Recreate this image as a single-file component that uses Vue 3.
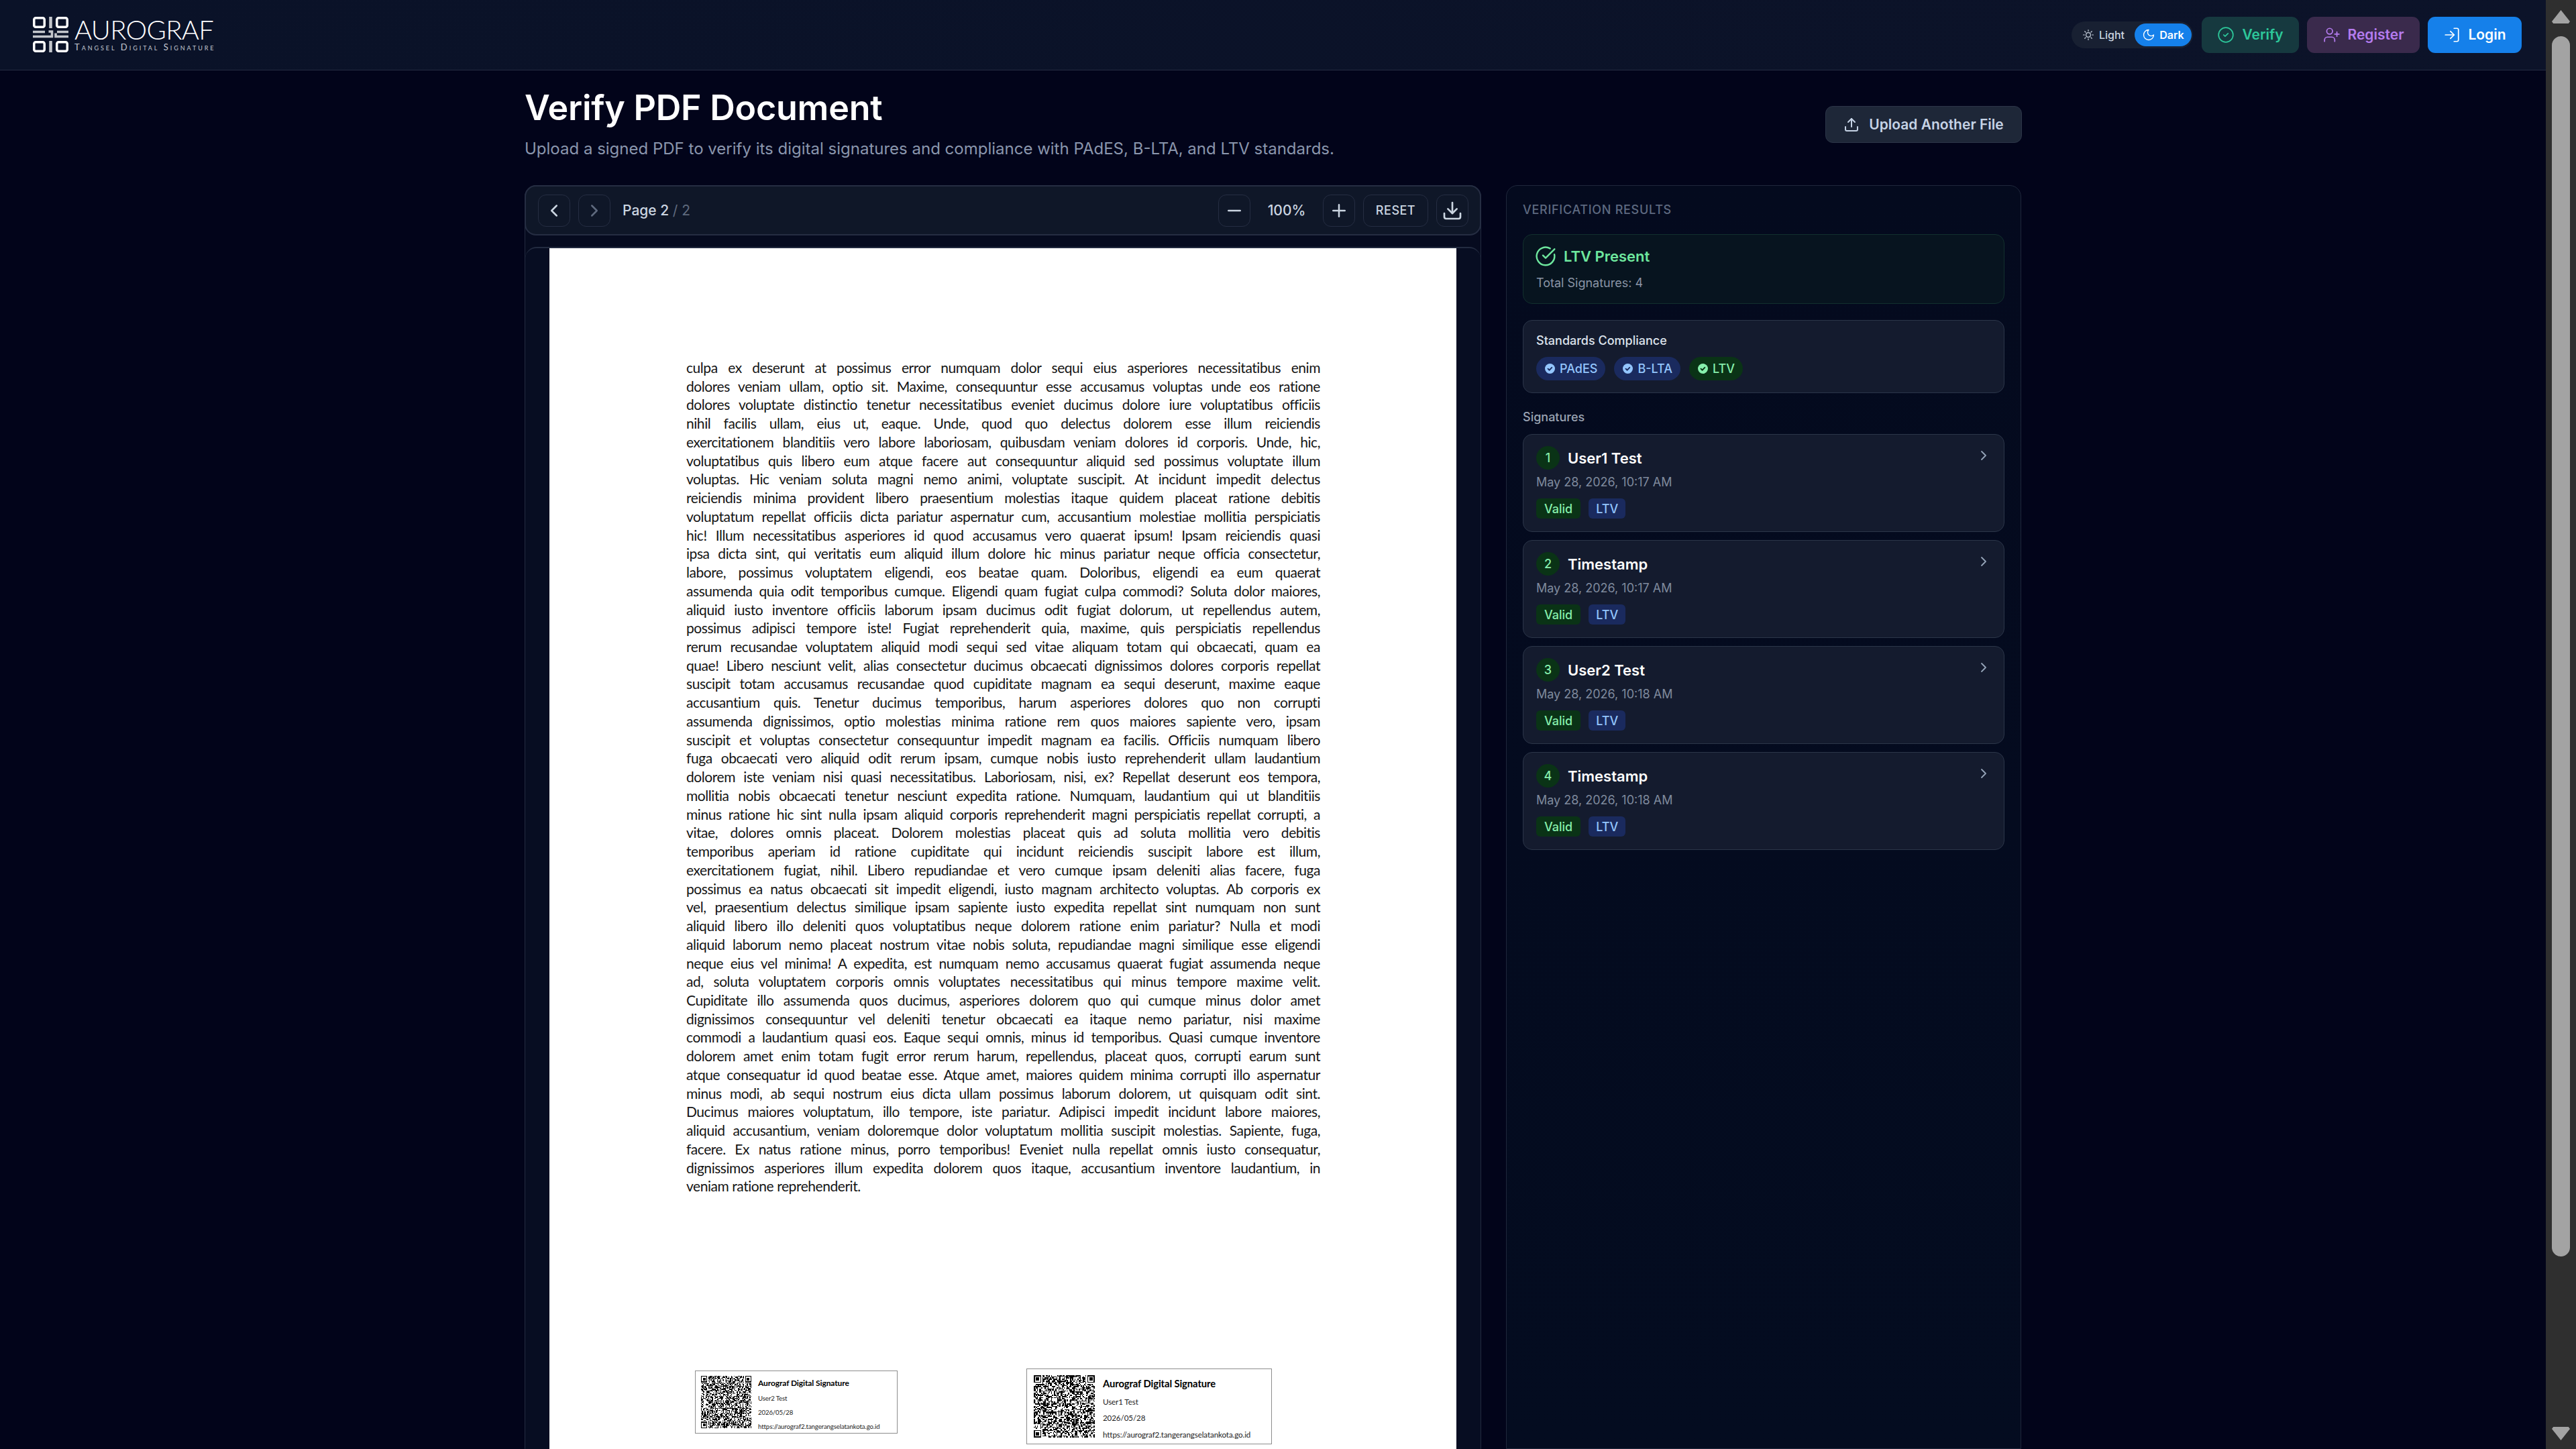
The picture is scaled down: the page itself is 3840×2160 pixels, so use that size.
<script setup>
const pdfLines = `culpa ex deserunt at possimus error numquam dolor sequi eius asperiores necessitatibus enim
dolores veniam ullam, optio sit. Maxime, consequuntur esse accusamus voluptas unde eos ratione
dolores voluptate distinctio tenetur necessitatibus eveniet ducimus dolore iure voluptatibus officiis
nihil facilis ullam, eius ut, eaque. Unde, quod quo delectus dolorem esse illum reiciendis
exercitationem blanditiis vero labore laboriosam, quibusdam veniam dolores id corporis. Unde, hic,
voluptatibus quis libero eum atque facere aut consequuntur aliquid sed possimus voluptate illum
voluptas. Hic veniam soluta magni nemo animi, voluptate suscipit. At incidunt impedit delectus
reiciendis minima provident libero praesentium molestias itaque quidem placeat ratione debitis
voluptatum repellat officiis dicta pariatur aspernatur cum, accusantium molestiae mollitia perspiciatis
hic! Illum necessitatibus asperiores id quod accusamus vero quaerat ipsum! Ipsam reiciendis quasi
ipsa dicta sint, qui veritatis eum aliquid illum dolore hic minus pariatur neque officia consectetur,
labore, possimus voluptatem eligendi, eos beatae quam. Doloribus, eligendi ea eum quaerat
assumenda quia odit temporibus cumque. Eligendi quam fugiat culpa commodi? Soluta dolor maiores,
aliquid iusto inventore officiis laborum ipsam ducimus odit fugiat dolorum, ut repellendus autem,
possimus adipisci tempore iste! Fugiat reprehenderit quia, maxime, quis perspiciatis repellendus
rerum recusandae voluptatem aliquid modi sequi sed vitae aliquam totam qui obcaecati, quam ea
quae! Libero nesciunt velit, alias consectetur ducimus obcaecati dignissimos dolores corporis repellat
suscipit totam accusamus recusandae quod cupiditate magnam ea sequi deserunt, maxime eaque
accusantium quis. Tenetur ducimus temporibus, harum asperiores dolores quo non corrupti
assumenda dignissimos, optio molestias minima ratione rem quos maiores sapiente vero, ipsam
suscipit et voluptas consectetur consequuntur impedit magnam ea facilis. Officiis numquam libero
fuga obcaecati vero aliquid odit rerum ipsam, cumque nobis iusto reprehenderit ullam laudantium
dolorem iste veniam nisi quasi necessitatibus. Laboriosam, nisi, ex? Repellat deserunt eos tempora,
mollitia nobis obcaecati tenetur nesciunt expedita ratione. Numquam, laudantium qui ut blanditiis
minus ratione hic sint nulla ipsam aliquid corporis reprehenderit magni perspiciatis repellat corrupti, a
vitae, dolores omnis placeat. Dolorem molestias placeat quis ad soluta mollitia vero debitis
temporibus aperiam id ratione cupiditate qui incidunt reiciendis suscipit labore est illum,
exercitationem fugiat, nihil. Libero repudiandae et vero cumque ipsam deleniti alias facere, fuga
possimus ea natus obcaecati sit impedit eligendi, iusto magnam architecto voluptas. Ab corporis ex
vel, praesentium delectus similique ipsam sapiente iusto expedita repellat sint numquam non sunt
aliquid libero illo deleniti quos voluptatibus neque dolorem ratione enim pariatur? Nulla et modi
aliquid laborum nemo placeat nostrum vitae nobis soluta, repudiandae magni similique esse eligendi
neque eius vel minima! A expedita, est numquam nemo accusamus quaerat fugiat assumenda neque
ad, soluta voluptatem corporis omnis voluptates necessitatibus qui minus tempore maxime velit.
Cupiditate illo assumenda quos ducimus, asperiores dolorem quo qui cumque minus dolor amet
dignissimos consequuntur vel deleniti tenetur obcaecati ea itaque nemo pariatur, nisi maxime
commodi a laudantium quasi eos. Eaque sequi omnis, minus id temporibus. Quasi cumque inventore
dolorem amet enim totam fugit error rerum harum, repellendus, placeat quos, corrupti earum sunt
atque consequatur id quod beatae esse. Atque amet, maiores quidem minima corrupti illo aspernatur
minus modi, ab sequi nostrum eius dicta ullam possimus laborum dolorem, ut quisquam odit sint.
Ducimus maiores voluptatum, illo tempore, iste pariatur. Adipisci impedit incidunt labore maiores,
aliquid accusantium, veniam doloremque dolor voluptatum mollitia suscipit molestias. Sapiente, fuga,
facere. Ex natus ratione minus, porro temporibus! Eveniet nulla repellat omnis iusto consequatur,
dignissimos asperiores illum expedita dolorem quos itaque, accusantium inventore laudantium, in`.split('\n')
const lastLine = 'veniam ratione reprehenderit.'

const signatures = [
  { n: 1, name: 'User1 Test', date: 'May 28, 2026, 10:17 AM' },
  { n: 2, name: 'Timestamp', date: 'May 28, 2026, 10:17 AM' },
  { n: 3, name: 'User2 Test', date: 'May 28, 2026, 10:18 AM' },
  { n: 4, name: 'Timestamp', date: 'May 28, 2026, 10:18 AM' },
]

function qrPath(seed) {
  const size = 57
  let s = seed
  const rnd = () => {
    s = (s * 1664525 + 1013904223) >>> 0
    return (s >>> 16) / 65536
  }
  let d = ''
  const inFinder = (x, y) =>
    (x < 8 && y < 8) || (x >= size - 8 && y < 8) || (x < 8 && y >= size - 8)
  for (let y = 0; y < size; y++) {
    for (let x = 0; x < size; x++) {
      if (!inFinder(x, y) && rnd() > 0.5) d += `M${x} ${y}h1v1h-1z`
    }
  }
  for (const [fx, fy] of [[0, 0], [size - 7, 0], [0, size - 7]]) {
    d += `M${fx} ${fy}h7v7h-7zM${fx + 1} ${fy + 1}v5h5v-5zM${fx + 2} ${fy + 2}h3v3h-3z`
  }
  return d
}
const qrA = qrPath(12345)
const qrB = qrPath(98765)
</script>

<template>
  <div class="app">
    <div class="viewport">
      <header class="nav">
        <div class="brand">
          <svg class="brand-mark" viewBox="0 0 53 53" fill="none" stroke="#fff">
            <rect x="1.75" y="1.75" width="15.5" height="13.5" rx="2.5" stroke-width="3.5" />
            <rect x="35.75" y="1.75" width="15.5" height="13.5" rx="2.5" stroke-width="3.5" />
            <rect x="1.75" y="37.75" width="15.5" height="13.5" rx="2.5" stroke-width="3.5" />
            <rect x="35.75" y="37.75" width="15.5" height="13.5" rx="2.5" stroke-width="3.5" />
            <path d="M26.5 0v17M26.5 36v17" stroke="#c3c6cc" stroke-width="4.5" />
            <path d="M0 22.5h18M53 22.5h-17M0 29.5h28.5v-7.5h-5M53 29.5h-19v-5" stroke="#c3c6cc" stroke-width="3.6" />
          </svg>
          <div class="brand-text">
            <div class="brand-name">AUROGRAF</div>
            <div class="brand-sub">Tangsel Digital Signature</div>
          </div>
        </div>
        <div class="nav-actions">
          <div class="theme">
            <span class="theme-opt">
              <svg class="ico-theme" viewBox="0 0 24 24" fill="none" stroke="currentColor" stroke-width="1.6" stroke-linecap="round">
                <circle cx="12" cy="12" r="4.5" />
                <path d="M12 2v2.5M12 19.5V22M2 12h2.5M19.5 12H22M5 5l1.8 1.8M17.2 17.2 19 19M5 19l1.8-1.8M17.2 6.8 19 5" />
              </svg>
              Light
            </span>
            <span class="theme-opt active">
              <svg class="ico-theme ico-moon" viewBox="0 0 24 24" fill="none" stroke="currentColor" stroke-width="1.6" stroke-linecap="round" stroke-linejoin="round">
                <path d="M12 3a6 6 0 0 0 9 9 9 9 0 1 1-9-9Z" />
              </svg>
              Dark
            </span>
          </div>
          <button class="nav-btn verify">
            <svg class="nav-ico" viewBox="0 0 24 24" fill="none" stroke="currentColor" stroke-width="1.6" stroke-linecap="round" stroke-linejoin="round">
              <circle cx="12" cy="12" r="10" /><path d="m9 12 2 2 4-4" />
            </svg>
            Verify
          </button>
          <button class="nav-btn register">
            <svg class="nav-ico" viewBox="0 0 24 24" fill="none" stroke="currentColor" stroke-width="1.6" stroke-linecap="round" stroke-linejoin="round">
              <path d="M16 21v-2a4 4 0 0 0-4-4H6a4 4 0 0 0-4 4v2" /><circle cx="9" cy="7" r="4" /><path d="M19 8v6M22 11h-6" />
            </svg>
            Register
          </button>
          <button class="nav-btn login">
            <svg class="nav-ico" viewBox="0 0 24 24" fill="none" stroke="currentColor" stroke-width="1.6" stroke-linecap="round" stroke-linejoin="round">
              <path d="M15 3h4a2 2 0 0 1 2 2v14a2 2 0 0 1-2 2h-4" /><path d="m10 17 5-5-5-5" /><path d="M15 12H3" />
            </svg>
            Login
          </button>
        </div>
      </header>

      <main class="content">
        <div class="head">
          <div>
            <h1 class="title">Verify PDF Document</h1>
            <p class="subtitle">Upload a signed PDF to verify its digital signatures and compliance with PAdES, B-LTA, and LTV standards.</p>
          </div>
          <button class="upload">
            <svg class="upload-ico" viewBox="0 0 24 24" fill="none" stroke="currentColor" stroke-width="2" stroke-linecap="round" stroke-linejoin="round">
              <path d="M21 15v4a2 2 0 0 1-2 2H5a2 2 0 0 1-2-2v-4" /><path d="m17 8-5-5-5 5" /><path d="M12 3v12" />
            </svg>
            Upload Another File
          </button>
        </div>

        <div class="columns">
          <section class="viewer">
            <div class="toolbar">
              <div class="tool-group">
                <button class="tool">
                  <svg class="tool-ico" viewBox="0 0 24 24" fill="none" stroke="currentColor" stroke-width="2" stroke-linecap="round" stroke-linejoin="round"><path d="m15 18-6-6 6-6" /></svg>
                </button>
                <button class="tool off">
                  <svg class="tool-ico" viewBox="0 0 24 24" fill="none" stroke="currentColor" stroke-width="2" stroke-linecap="round" stroke-linejoin="round"><path d="m9 18 6-6-6-6" /></svg>
                </button>
                <span class="page-no">Page 2 <span class="page-of">/ 2</span></span>
              </div>
              <div class="tool-group right">
                <button class="tool">
                  <svg class="tool-ico" viewBox="0 0 24 24" fill="none" stroke="currentColor" stroke-width="2" stroke-linecap="round"><path d="M5 12h14" /></svg>
                </button>
                <span class="zoom-val">100%</span>
                <button class="tool">
                  <svg class="tool-ico" viewBox="0 0 24 24" fill="none" stroke="currentColor" stroke-width="2" stroke-linecap="round"><path d="M5 12h14M12 5v14" /></svg>
                </button>
                <button class="tool reset">RESET</button>
                <button class="tool">
                  <svg class="tool-ico large" viewBox="0 0 24 24" fill="none" stroke="currentColor" stroke-width="2" stroke-linecap="round" stroke-linejoin="round">
                    <path d="M21 15v4a2 2 0 0 1-2 2H5a2 2 0 0 1-2-2v-4" /><path d="m7 10 5 5 5-5" /><path d="M12 15V3" />
                  </svg>
                </button>
              </div>
            </div>
            <div class="canvas">
              <div class="pdf-page">
                <div class="pdf-text">
                  <div v-for="(l, i) in pdfLines" :key="i" class="pdf-line">{{ l }}</div>
                  <div class="pdf-line last">{{ lastLine }}</div>
                </div>
                <div class="stamps">
                  <div class="stamp small">
                    <svg class="qr" viewBox="0 0 57 57" shape-rendering="crispEdges" preserveAspectRatio="none"><path :d="qrA" fill="#000" fill-rule="evenodd" /></svg>
                    <div class="stamp-text">
                      <div class="stamp-title">Aurograf Digital Signature</div>
                      <div>User2 Test</div>
                      <div>2026/05/28</div>
                      <div>https://aurograf2.tangerangselatankota.go.id</div>
                    </div>
                  </div>
                  <div class="stamp big">
                    <svg class="qr" viewBox="0 0 57 57" shape-rendering="crispEdges" preserveAspectRatio="none"><path :d="qrB" fill="#000" fill-rule="evenodd" /></svg>
                    <div class="stamp-text">
                      <div class="stamp-title">Aurograf Digital Signature</div>
                      <div>User1 Test</div>
                      <div>2026/05/28</div>
                      <div>https://aurograf2.tangerangselatankota.go.id</div>
                    </div>
                  </div>
                </div>
              </div>
            </div>
          </section>

          <aside class="results">
            <div class="results-head">VERIFICATION RESULTS</div>
            <div class="ltv-card">
              <div class="ltv-row">
                <svg class="ltv-ico" viewBox="0 0 24 24" fill="none" stroke="currentColor" stroke-width="1.8" stroke-linecap="round" stroke-linejoin="round">
                  <path d="M21.8 10A10 10 0 1 1 17 3.3" /><path d="m9 11 3 3L22 4" />
                </svg>
                LTV Present
              </div>
              <div class="ltv-total">Total Signatures: 4</div>
            </div>
            <div class="std-card">
              <div class="std-title">Standards Compliance</div>
              <div class="chips">
                <span class="chip blue">
                  <svg class="chip-ico" viewBox="0 0 16 16"><circle cx="8" cy="8" r="8" fill="currentColor" /><path d="m4.8 8.2 2.2 2.2 4-4.2" fill="none" stroke="#1a2a5e" stroke-width="2" stroke-linecap="round" stroke-linejoin="round" /></svg>
                  PAdES
                </span>
                <span class="chip blue">
                  <svg class="chip-ico" viewBox="0 0 16 16"><circle cx="8" cy="8" r="8" fill="currentColor" /><path d="m4.8 8.2 2.2 2.2 4-4.2" fill="none" stroke="#1a2a5e" stroke-width="2" stroke-linecap="round" stroke-linejoin="round" /></svg>
                  B-LTA
                </span>
                <span class="chip green">
                  <svg class="chip-ico" viewBox="0 0 16 16"><circle cx="8" cy="8" r="8" fill="currentColor" /><path d="m4.8 8.2 2.2 2.2 4-4.2" fill="none" stroke="#0a3316" stroke-width="2" stroke-linecap="round" stroke-linejoin="round" /></svg>
                  LTV
                </span>
              </div>
            </div>
            <div class="sig-label">Signatures</div>
            <div class="sig-list">
              <div v-for="s in signatures" :key="s.n" class="sig">
                <div class="sig-top">
                  <span class="sig-n">{{ s.n }}</span>
                  <span class="sig-name">{{ s.name }}</span>
                  <svg class="sig-chev" viewBox="0 0 24 24" fill="none" stroke="currentColor" stroke-width="1.8" stroke-linecap="round" stroke-linejoin="round"><path d="m9 18 6-6-6-6" /></svg>
                </div>
                <div class="sig-date">{{ s.date }}</div>
                <div class="sig-tags">
                  <span class="tag valid">Valid</span>
                  <span class="tag ltv">LTV</span>
                </div>
              </div>
            </div>
          </aside>
        </div>
      </main>
    </div>
    <div class="scrollbar">
      <span class="arrow up"></span>
      <span class="thumb"></span>
      <span class="arrow down"></span>
    </div>
  </div>
</template>

<style>
html, body { margin: 0; background: #02041a; overflow: hidden; }
</style>

<style scoped>
* { box-sizing: border-box; }
button { font-family: inherit; cursor: pointer; }
.app {
  display: flex;
  width: 3840px;
  height: 2160px;
  overflow: hidden;
  background: #02041a;
  font-family: Inter, "Noto Sans", sans-serif;
  color: #fff;
}
.viewport { width: 3795px; height: 2160px; overflow: hidden; }

.nav {
  height: 105px;
  border-bottom: 1px solid #252c42;
  background: linear-gradient(90deg, #0a1228, #0c1329);
  display: flex;
  align-items: center;
  justify-content: space-between;
  padding: 0 36px 1px 49px;
}
.brand { display: flex; align-items: center; gap: 9px; }
.brand-mark { width: 53px; height: 53px; }
.brand-text { display: flex; flex-direction: column; }
.brand-name {
  font-family: Lato, sans-serif;
  font-weight: 300;
  font-size: 40px;
  line-height: 36px;
  letter-spacing: -0.75px;
  color: #fff;
}
.brand-sub {
  font-family: Lato, sans-serif;
  font-variant: small-caps;
  font-size: 13px;
  line-height: 16px;
  letter-spacing: 2.95px;
  color: #c6cad3;
}
.nav-actions { display: flex; align-items: center; gap: 12px; }
.theme {
  display: flex;
  align-items: center;
  justify-content: space-between;
  width: 181px;
  height: 40px;
  padding: 0 2px 0 16px;
  margin-right: 1px;
  border-radius: 20px;
  background: #182032;
}
.theme-opt {
  display: flex;
  align-items: center;
  gap: 7px;
  font-size: 16px;
  font-weight: 500;
  color: #cbd5e1;
}
.theme-opt.active {
  width: 85px;
  height: 34px;
  justify-content: center;
  border-radius: 17px;
  background: #1580ea;
  color: #fff;
  font-weight: 600;
  gap: 6px;
}
.ico-theme { width: 18px; height: 18px; }
.ico-moon { width: 20px; height: 20px; }
.nav-btn {
  display: flex;
  align-items: center;
  justify-content: center;
  gap: 11px;
  height: 54px;
  border: 0;
  border-radius: 11px;
  font-size: 21px;
  font-weight: 600;
}
.nav-ico { width: 26px; height: 26px; }
.verify { width: 145px; background: #16393f; color: #2dc79a; }
.register { width: 168px; background: #3a2a4c; color: #b57cf0; }
.login { width: 140px; background: #1580ea; color: #fff; }

.content { margin-left: 782px; width: 2232px; }
.head {
  display: flex;
  align-items: flex-start;
  justify-content: space-between;
  height: 171px;
}
.title {
  margin: 0;
  padding-top: 25px;
  font-size: 52px;
  line-height: 62px;
  font-weight: 600;
  letter-spacing: -0.25px;
  color: #fff;
}
.subtitle {
  margin: 12px 0 0;
  font-size: 24px;
  line-height: 36px;
  color: #8a96ad;
}
.upload {
  margin-top: 53px;
  width: 293px;
  height: 55px;
  display: flex;
  align-items: center;
  justify-content: center;
  gap: 14px;
  border: 1px solid #2c3548;
  border-radius: 11px;
  background: #1e2738;
  color: #c6d3e6;
  font-size: 21px;
  font-weight: 600;
}
.upload-ico { width: 24px; height: 24px; }

.columns {
  display: grid;
  grid-template-columns: 1426px 768px;
  column-gap: 37px;
}
.viewer {
  height: 1884px;
  border: 1px solid #232b40;
  border-radius: 17px 17px 0 0;
  background: #060b1f;
}
.toolbar {
  margin: -1px -1px 0;
  height: 75px;
  display: flex;
  align-items: center;
  justify-content: space-between;
  padding: 0 17px 0 18px;
  border: 2px solid #252d42;
  border-radius: 17px;
  background: #0f1728;
}
.tool-group { display: flex; align-items: center; gap: 12px; }
.tool {
  width: 48px;
  height: 48px;
  padding: 0;
  display: flex;
  align-items: center;
  justify-content: center;
  border: 1px solid #252d42;
  border-radius: 12px;
  background: transparent;
  color: #cbd5e1;
}
.tool.off { color: #5f6a7e; }
.tool-ico { width: 30px; height: 30px; }
.tool-ico.large { width: 32px; height: 32px; }
.tool.reset {
  width: 97px;
  font-size: 18px;
  font-weight: 500;
  letter-spacing: 0.5px;
  color: #cbd5e1;
}
.page-no {
  margin-left: 6px;
  font-size: 21px;
  font-weight: 500;
  color: #cbd5e1;
}
.page-of { font-weight: 400; color: #5f6a7e; }
.zoom-val {
  width: 84px;
  text-align: center;
  font-size: 21px;
  font-weight: 500;
  color: #cbd5e1;
}
.canvas {
  margin-top: 17px;
  height: 1792px;
  overflow: hidden;
  display: flex;
  justify-content: center;
  border-top: 2px solid #232b40;
  border-radius: 17px 17px 0 0;
  background: #070d22;
}
.pdf-page {
  width: 1352px;
  height: 1792px;
  flex: none;
  background: #fff;
  color: #111;
  padding: 164px 0 0;
}
.pdf-text { margin-left: 204px; width: 945px; }
.pdf-line {
  font-family: Lato, sans-serif;
  font-size: 21px;
  line-height: 27.73px;
  letter-spacing: -0.45px;
  text-align: justify;
  text-align-last: justify;
  white-space: nowrap;
  color: #151515;
}
.pdf-line.last { text-align-last: left; }
.stamps {
  display: flex;
  align-items: flex-start;
  margin: 258px 0 0 217px;
  color: #222;
  font-family: Lato, sans-serif;
}
.stamp {
  display: flex;
  flex: none;
  background: #fff;
  border: 1px solid #8d8d8d;
}
.stamp.small {
  width: 302px;
  height: 94px;
  margin-top: 3px;
  padding: 7px 8px 4px 8px;
  gap: 10px;
  font-size: 9.6px;
  letter-spacing: -0.1px;
}
.stamp.big {
  width: 366px;
  height: 113px;
  margin-left: 192px;
  padding: 9px 10px 7px;
  gap: 12px;
  font-size: 11.6px;
  letter-spacing: -0.1px;
}
.qr { flex: none; }
.small .qr { width: 75px; height: 78px; }
.big .qr { width: 91px; height: 93px; }
.stamp-text {
  display: flex;
  flex-direction: column;
  justify-content: space-between;
  white-space: nowrap;
  padding: 3px 0 0;
}
.stamp-title { font-weight: 700; color: #000; }
.small .stamp-title { font-size: 12px; }
.big .stamp-title { font-size: 14.8px; }

.results {
  height: 1884px;
  padding: 20px 24px 0;
  border: 1px solid #1f273b;
  border-radius: 17px 17px 0 0;
  background: linear-gradient(180deg, #040a1e, #040c20);
}
.results-head {
  height: 32px;
  line-height: 32px;
  font-size: 18px;
  font-weight: 500;
  letter-spacing: 0.7px;
  color: #5d6980;
}
.ltv-card {
  margin-top: 20px;
  height: 104px;
  padding: 17px 19px;
  border: 1px solid #12302e;
  border-radius: 14px;
  background: #07141f;
}
.ltv-row {
  display: flex;
  align-items: center;
  gap: 11px;
  height: 30px;
  font-size: 22px;
  font-weight: 600;
  color: #6ee79e;
}
.ltv-ico { width: 32px; height: 32px; margin-left: -2px; }
.ltv-total {
  margin-top: 13px;
  font-size: 18px;
  line-height: 24px;
  color: #8a94a6;
}
.std-card {
  margin-top: 24px;
  height: 109px;
  padding: 18px 19px;
  border: 1px solid #2b3549;
  border-radius: 14px;
  background: #141b2e;
}
.std-title {
  font-size: 18px;
  line-height: 24px;
  font-weight: 500;
  color: #dde3ec;
}
.chips { display: flex; gap: 13px; margin-top: 12px; }
.chip {
  display: flex;
  align-items: center;
  gap: 7px;
  height: 35px;
  padding: 0 12px 0 13px;
  border-radius: 17.5px;
  font-size: 18px;
  font-weight: 500;
}
.chip-ico { width: 15px; height: 15px; }
.chip.blue { background: #1a2a5e; color: #93c5fd; }
.chip.green { background: #0a3316; color: #86efac; }
.sig-label {
  margin-top: 23px;
  height: 26px;
  line-height: 26px;
  font-size: 18px;
  font-weight: 500;
  color: #9aa3b3;
}
.sig-list { margin-top: 12px; display: flex; flex-direction: column; gap: 12px; }
.sig {
  height: 146px;
  padding: 17px 19px;
  border: 1px solid #2b3549;
  border-radius: 14px;
  background: #141b2e;
}
.sig-top { display: flex; align-items: center; gap: 12px; height: 35px; }
.sig-n {
  width: 35px;
  height: 35px;
  display: flex;
  align-items: center;
  justify-content: center;
  border-radius: 50%;
  background: #0a3316;
  color: #86efac;
  font-size: 18px;
  font-weight: 500;
}
.sig-name { font-size: 22px; font-weight: 600; color: #fff; flex: 1; }
.sig-chev { width: 24px; height: 24px; color: #94a3b8; margin: -8px -1px 0 0; }
.sig-date {
  margin-top: 6px;
  font-size: 18px;
  line-height: 26px;
  color: #7f8a9d;
}
.sig-tags { display: flex; gap: 12px; margin-top: 11px; }
.tag {
  height: 30px;
  display: flex;
  align-items: center;
  padding: 0 11px;
  border-radius: 6px;
  font-size: 18px;
  font-weight: 500;
}
.tag.valid { background: #0a3316; color: #86efac; padding: 0 12px; }
.tag.ltv { background: #1a2a5e; color: #93c5fd; }

.scrollbar {
  flex: none;
  width: 45px;
  height: 2160px;
  background: #2f2f2f;
  display: flex;
  flex-direction: column;
  align-items: center;
  padding-top: 15px;
}
.arrow {
  width: 27px;
  height: 20px;
  background: #a3a3a3;
  clip-path: polygon(50% 0, 100% 85%, 92% 100%, 8% 100%, 0 85%);
}
.arrow.down {
  margin-top: auto;
  margin-bottom: 13px;
  clip-path: polygon(8% 0, 92% 0, 100% 15%, 50% 100%, 0 15%);
}
.thumb {
  margin-top: 19px;
  width: 27px;
  height: 1819px;
  border-radius: 13.5px;
  background: #a3a3a3;
}
</style>
